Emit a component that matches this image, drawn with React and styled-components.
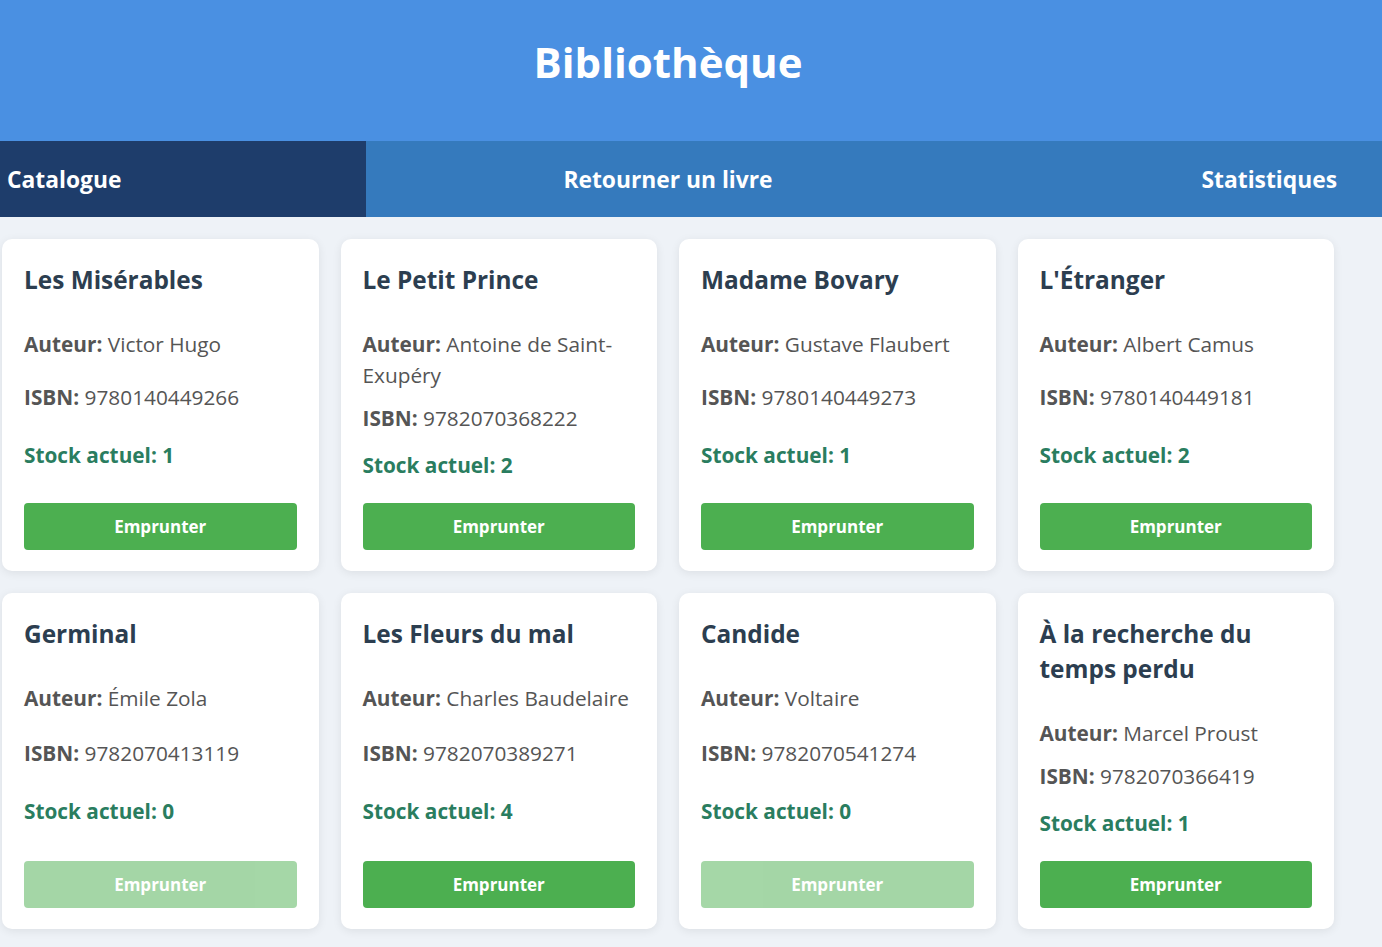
import React from 'react';
import styled, { createGlobalStyle } from 'styled-components';

const GlobalStyle = createGlobalStyle`
  html, body {
    margin: 0;
    padding: 0;
    background: #eef2f7;
    font-family: "Segoe UI", "Open Sans", "Noto Sans", sans-serif;
  }
`;

const Page = styled.div`
  min-height: 100vh;
  background: #eef2f7;
`;

const Header = styled.header`
  background: #4a90e2;
  height: 141px;
  box-sizing: border-box;
  padding-top: 36px;
`;

const Title = styled.h1`
  width: 1336px;
  margin: 0;
  text-align: center;
  color: #fff;
  font-size: 42px;
  line-height: 52px;
  font-weight: 700;
`;

const Nav = styled.nav`
  display: flex;
  height: 76px;
  background: #357abd;
`;

const Tab = styled.button`
  border: 0;
  margin: 0;
  height: 100%;
  font-family: inherit;
  font-size: 22.8px;
  font-weight: 700;
  color: #fff;
  cursor: pointer;
  background: ${p => (p.$active ? '#1e3d6b' : 'transparent')};
  width: ${p => p.$width};
  flex: ${p => (p.$grow ? 1 : 'none')};
  text-align: ${p => p.$align};
  padding: 0 ${p => p.$padRight || '0px'} 0 ${p => p.$padLeft || '0px'};
`;

const Grid = styled.main`
  width: 1336px;
  box-sizing: border-box;
  padding: 22px 2px 19px;
  display: grid;
  grid-template-columns: repeat(4, 1fr);
  gap: 22px;
`;

const Card = styled.div`
  background: #fff;
  border-radius: 10px;
  box-shadow: 0 2px 10px rgba(0, 0, 0, 0.08);
  padding: 23px 22px 21px;
  display: flex;
  flex-direction: column;
`;

const BookTitle = styled.h3`
  margin: 0 0 32px;
  color: #2c3e50;
  font-size: 24.4px;
  line-height: 35px;
  font-weight: 700;
`;

const Body = styled.div`
  flex: 1;
  display: flex;
  flex-direction: column;
  justify-content: space-between;
`;

const Info = styled.p`
  margin: 0 0 ${p => p.$gap};
  color: #555;
  font-size: 20.8px;
  line-height: 31px;

  strong {
    font-weight: 700;
  }
`;

const Stock = styled.p`
  margin: 0 0 21px;
  color: #2a7d5f;
  font-size: 20.8px;
  line-height: 33px;
  font-weight: 700;
`;

const BorrowButton = styled.button`
  height: 47px;
  border: 0;
  border-radius: 4px;
  background: #4caf50;
  color: #fff;
  font-family: inherit;
  font-size: 17px;
  font-weight: 700;
  cursor: pointer;

  &:disabled {
    opacity: 0.5;
    cursor: not-allowed;
  }
`;

const books = [
  { title: 'Les Misérables', author: 'Victor Hugo', isbn: '9780140449266', stock: 1 },
  { title: 'Le Petit Prince', author: 'Antoine de Saint-Exupéry', isbn: '9782070368222', stock: 2 },
  { title: 'Madame Bovary', author: 'Gustave Flaubert', isbn: '9780140449273', stock: 1 },
  { title: "L'Étranger", author: 'Albert Camus', isbn: '9780140449181', stock: 2 },
  { title: 'Germinal', author: 'Émile Zola', isbn: '9782070413119', stock: 0 },
  { title: 'Les Fleurs du mal', author: 'Charles Baudelaire', isbn: '9782070389271', stock: 4 },
  { title: 'Candide', author: 'Voltaire', isbn: '9782070541274', stock: 0 },
  { title: 'À la recherche du temps perdu', author: 'Marcel Proust', isbn: '9782070366419', stock: 1 },
];

export default function App() {
  return (
    <Page>
      <GlobalStyle />
      <Header>
        <Title>Bibliothèque</Title>
      </Header>
      <Nav>
        <Tab $active $width="366px" $align="left" $padLeft="7px">Catalogue</Tab>
        <Tab $grow $align="center">Retourner un livre</Tab>
        <Tab $width="412px" $align="right" $padRight="45px">Statistiques</Tab>
      </Nav>
      <Grid>
        {books.map(book => (
          <Card key={book.isbn}>
            <BookTitle>{book.title}</BookTitle>
            <Body>
              <Info $gap="12px"><strong>Auteur:</strong> {book.author}</Info>
              <Info $gap="15px"><strong>ISBN:</strong> {book.isbn}</Info>
              <Stock>Stock actuel: {book.stock}</Stock>
              <BorrowButton disabled={book.stock === 0}>Emprunter</BorrowButton>
            </Body>
          </Card>
        ))}
      </Grid>
    </Page>
  );
}
